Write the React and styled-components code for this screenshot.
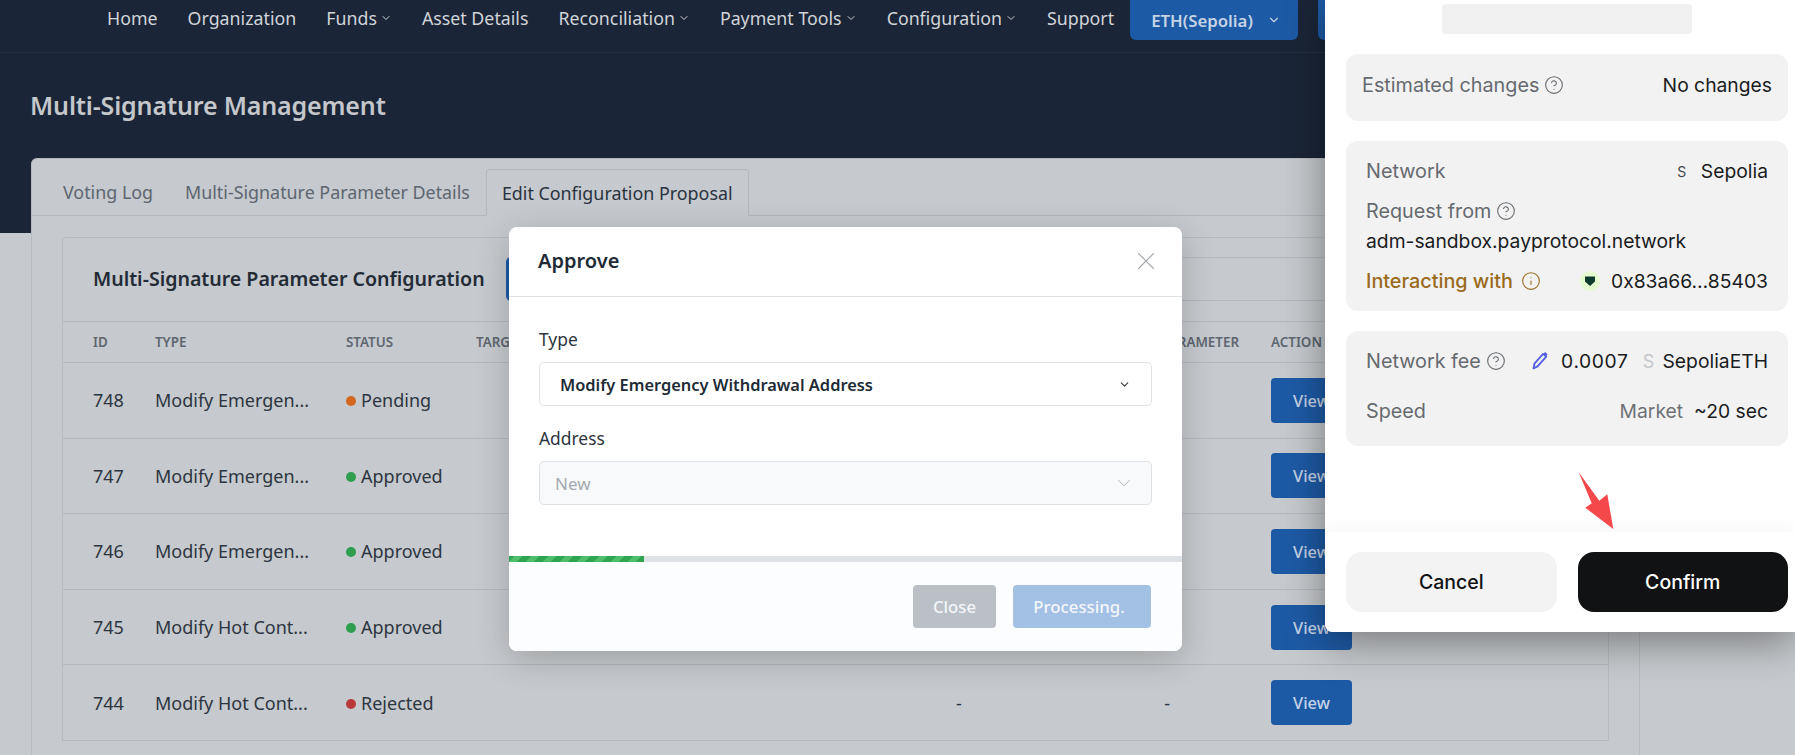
import React from "react";
import styled, { createGlobalStyle } from "styled-components";
import { ChevronDown, X, CircleHelp, Info } from "lucide-react";

const Global = createGlobalStyle`
  html, body { margin: 0; padding: 0; height: 755px; overflow: hidden; background: #c6c9cd; }
  * { box-sizing: border-box; }
  body { font-family: "Noto Sans", "Open Sans", sans-serif; }
`;

const Page = styled.div`
  position: relative;
  width: 1795px;
  height: 755px;
  overflow: hidden;
  background: #c6c9cd;
`;
const Hero = styled.header`
  height: 233px;
  background: #1a2537;
`;
const Nav = styled.nav`
  height: 53px;
  display: flex;
  align-items: flex-start;
  gap: 30px;
  padding-left: 107px;
  border-bottom: 1px solid #232f42;
`;
const NavItem = styled.a`
  display: flex;
  align-items: center;
  gap: 3px;
  height: 36px;
  font-size: 17.8px;
  color: #d1d4d9;
  white-space: nowrap;
`;
const NetworkRow = styled.div`
  display: flex;
  gap: 20px;
  margin-left: -14px;
`;
const NetworkButton = styled.div`
  width: 168px;
  height: 40px;
  padding: 0 17px 0 21px;
  display: flex;
  align-items: center;
  justify-content: space-between;
  background: #1d5aa5;
  border-radius: 0 0 6px 6px;
  color: #c5d3e6;
  font-size: 16.8px;
  font-weight: 600;
  white-space: nowrap;
`;
const PageTitle = styled.h1`
  margin: 32px 0 0 30px;
  font-size: 25px;
  letter-spacing: -0.15px;
  line-height: 40px;
  font-weight: 600;
  color: #c4c7cb;
`;
const Card = styled.section`
  margin: -75px 0 0 31px;
  width: 1609px;
  height: 620px;
  background: #c6c9cd;
  border: 1px solid #b6babf;
  border-bottom: 0;
  border-radius: 6px 6px 0 0;
  position: relative;
`;
const Tabs = styled.div`
  height: 57px;
  padding: 10px 0 0 15px;
  display: flex;
  border-bottom: 1px solid #b4b8be;
`;
const Tab = styled.div`
  height: ${p => (p.$active ? "47px" : "46px")};
  padding: 0 15px;
  display: flex;
  align-items: center;
  font-size: 17.86px;
  white-space: nowrap;
  color: ${p => (p.$active ? "#2a3340" : "#5e6670")};
  border: 1px solid ${p => (p.$active ? "#b4b8be" : "transparent")};
  border-bottom: 1px solid ${p => (p.$active ? "#c6c9cd" : "transparent")};
  border-radius: 4px 4px 0 0;
`;
const Inner = styled.div`
  margin: 21px 30px 0 30px;
  border: 1px solid #b6babf;
  border-bottom: 0;
  border-radius: 4px 4px 0 0;
`;
const InnerHead = styled.div`
  height: 84px;
  padding: 0 0 2px 30px;
  display: flex;
  align-items: center;
  border-bottom: 1px solid #b4b8be;
`;
const InnerTitle = styled.h2`
  margin: 0 21px 0 0;
  font-size: 19.6px;
  font-weight: 600;
  letter-spacing: -0.02px;
  color: #232b36;
  white-space: nowrap;
`;
const AddButton = styled.div`
  width: 130px;
  height: 44px;
  border-radius: 5px;
  background: #1d5aa5;
`;
const HeadFill = styled.div`
  flex: 1;
  height: 44px;
  border-top: 1px solid #b4b8be;
  border-bottom: 1px solid #b4b8be;
`;
const gridCols = "62px 191px 130px 396px 220px 179px 1fr";
const HeadRow = styled.div`
  height: 41px;
  padding-left: 30px;
  display: grid;
  grid-template-columns: ${gridCols};
  align-items: center;
  border-bottom: 1px solid #b4b8be;
  font-size: 13.4px;
  font-weight: 600;
  color: #5e6670;
`;
const HeadCellRight = styled.div`
  text-align: right;
  padding-right: 32px;
  white-space: nowrap;
`;
const Row = styled.div`
  height: 75.6px;
  padding-left: 30px;
  display: grid;
  grid-template-columns: ${gridCols};
  align-items: center;
  border-bottom: 1px solid #b4b8be;
  font-size: 18px;
  color: #2d3540;
`;
const StatusCell = styled.div`
  display: flex;
  align-items: center;
  gap: 5px;
`;
const Dot = styled.span`
  width: 10px;
  height: 10px;
  margin-top: 2px;
  border-radius: 50%;
  background: ${p => p.$color};
`;
const DashA = styled.div`
  padding-left: 84px;
`;
const DashB = styled.div`
  text-align: right;
  padding-right: 101px;
`;
const ViewButton = styled.div`
  width: 81px;
  height: 45px;
  display: flex;
  align-items: center;
  justify-content: center;
  background: #1d5aa5;
  border-radius: 4px;
  color: #c5d3e6;
  font-size: 16.4px;
  font-weight: 500;
`;

/* Modal */
const Modal = styled.div`
  position: absolute;
  left: 509px;
  top: 227px;
  width: 673px;
  height: 424px;
  background: #fff;
  border-radius: 8px;
  overflow: hidden;
  box-shadow: 0 8px 34px rgba(0, 0, 0, 0.2);
  display: flex;
  flex-direction: column;
`;
const ModalHead = styled.div`
  height: 70px;
  padding: 0 21px 2px 29px;
  display: flex;
  align-items: center;
  justify-content: space-between;
  border-bottom: 1px solid #dee2e6;
  color: #212b36;
  font-size: 20px;
  font-weight: 600;
`;
const ModalBody = styled.div`
  height: 259px;
  padding: 30px 30px 0;
`;
const FieldLabel = styled.div`
  height: 24px;
  line-height: 24px;
  margin-bottom: 11px;
  font-size: 17.4px;
  color: #2d3540;
`;
const SelectBox = styled.div`
  height: 44px;
  margin-bottom: ${p => (p.$disabled ? 0 : "20px")};
  padding: 0 ${p => (p.$disabled ? "16px" : "20px")} 0 ${p => (p.$disabled ? "15px" : "20px")};
  display: flex;
  align-items: center;
  justify-content: space-between;
  border: 1px solid #dee2e6;
  border-radius: 5px;
  background: ${p => (p.$disabled ? "#f8f9fa" : "#fff")};
  color: ${p => (p.$disabled ? "#a3a9b0" : "#212b36")};
  font-size: ${p => (p.$disabled ? "17px" : "16.4px")};
  font-weight: ${p => (p.$disabled ? 400 : 600)};
`;
const Progress = styled.div`
  height: 6px;
  background: #dee2e6;
`;
const ProgressFill = styled.div`
  height: 100%;
  width: 20%;
  background: repeating-linear-gradient(-45deg, #2fa552 0 6px, #4fbd6c 6px 12px);
`;
const ModalFoot = styled.div`
  flex: 1;
  padding: 23px 31px 0 0;
  display: flex;
  justify-content: flex-end;
  gap: 17px;
  background: #fcfdfe;
`;
const FootButton = styled.div`
  width: ${p => p.$w}px;
  height: 43px;
  padding-right: ${p => p.$trail || 0}px;
  display: flex;
  align-items: center;
  justify-content: center;
  border-radius: 4px;
  background: ${p => p.$bg};
  color: #f4f6f9;
  font-size: 16.8px;
  font-weight: 500;
`;

/* Wallet panel */
const Wallet = styled.aside`
  position: absolute;
  left: 1325px;
  top: 0;
  width: 470px;
  height: 632px;
  background: #fff;
  border-radius: 0 0 0 8px;
  box-shadow: 0 10px 42px rgba(0, 0, 0, 0.4);
  font-family: "Inter", sans-serif;
  font-size: 19.3px;
  color: #1a1c1e;
  display: flex;
  flex-direction: column;
`;
const WalletScroll = styled.div`
  flex: 1;
  padding: 4px 7px 0 21px;
  display: flex;
  flex-direction: column;
  gap: 20px;
  position: relative;
`;
const Skeleton = styled.div`
  align-self: center;
  width: 250px;
  height: 30px;
  border-radius: 4px;
  background: #f0f0f0;
`;
const InfoCard = styled.div`
  height: ${p => p.$h}px;
  padding: ${p => p.$pad};
  background: #f2f2f2;
  border-radius: 12px;
  display: flex;
  flex-direction: column;
`;
const InfoRow = styled.div`
  height: 24px;
  margin-top: ${p => p.$mt || 0}px;
  display: flex;
  align-items: center;
  justify-content: space-between;
  white-space: nowrap;
`;
const Label = styled.span`
  display: flex;
  align-items: center;
  gap: ${p => p.$gap || 5}px;
  font-size: 19.8px;
  color: ${p => p.$color || "#666a6f"};
  font-weight: ${p => p.$weight || 400};
`;
const Value = styled.span`
  display: flex;
  align-items: center;
  gap: ${p => p.$gap || 8}px;
`;
const Letter = styled.span`
  width: 18px;
  text-align: center;
  font-size: ${p => p.$size || 14}px;
  color: ${p => p.$color || "#44474b"};
`;
const FeeLetter = styled(Letter)`
  margin: 0 -3px 0 3px;
`;
const Amount = styled.span`
  letter-spacing: 0.6px;
`;
const Muted = styled.span`
  color: #6d7175;
`;
const ShieldBadge = styled.span`
  width: 20px;
  height: 20px;
  border-radius: 50%;
  background: #e4fbcf;
  display: flex;
  align-items: center;
  justify-content: center;
`;
const GasSvg = styled.svg`
  margin-right: 4px;
`;
const WalletFoot = styled.div`
  height: 100px;
  padding: 20px 7px 0 21px;
  display: flex;
  gap: 21px;
  background: #fff;
  border-radius: 0 0 0 8px;
  box-shadow: 0 -8px 12px rgba(0, 0, 0, 0.025);
`;
const WalletButton = styled.div`
  flex: 1;
  height: 60px;
  display: flex;
  align-items: center;
  justify-content: center;
  border-radius: 16px;
  font-size: 19.5px;
  font-weight: 500;
  background: ${p => (p.$primary ? "#111213" : "#f3f3f3")};
  color: ${p => (p.$primary ? "#fff" : "#111213")};
`;
const Arrow = styled.svg`
  position: absolute;
  left: 235px;
  top: 460px;
  z-index: 2;
`;

const navItems = [
  ["Home"], ["Organization"], ["Funds", 1], ["Asset Details"],
  ["Reconciliation", 1], ["Payment Tools", 1], ["Configuration", 1], ["Support"],
];
const rows = [
  [748, "Modify Emergen...", "Pending", "#d4671f"],
  [747, "Modify Emergen...", "Approved", "#2f9e4f"],
  [746, "Modify Emergen...", "Approved", "#2f9e4f"],
  [745, "Modify Hot Cont...", "Approved", "#2f9e4f"],
  [744, "Modify Hot Cont...", "Rejected", "#b83a3a"],
];

const GasIcon = () => (
  <GasSvg width="18" height="20" viewBox="0 0 16 18" fill="none">
    <path d="M2.2 15.6 L3 11.4 L10.8 2.6 L13.6 5 L5.8 13.9 Z" stroke="#5561e0" strokeWidth="1.7" strokeLinejoin="round" />
    <path d="M11 2.4 L12.6 0.9 L14.8 3 L13.6 4.8 Z" fill="#5561e0" />
  </GasSvg>
);
const ShieldIcon = () => (
  <svg width="12" height="12" viewBox="0 0 12 12">
    <path d="M1 1.5 H11 V6.5 L6 11 L1 6.5 Z" fill="#0c3a2c" />
  </svg>
);

export default function App() {
  return (
    <Page>
      <Global />
      <Hero>
        <Nav>
          {navItems.map(([t, c]) => (
            <NavItem key={t}>
              {t}
              {c && <ChevronDown size={12} strokeWidth={2} />}
            </NavItem>
          ))}
          <NetworkRow>
            <NetworkButton>
              ETH(Sepolia) <ChevronDown size={14} />
            </NetworkButton>
            <NetworkButton />
          </NetworkRow>
        </Nav>
        <PageTitle>Multi-Signature Management</PageTitle>
      </Hero>
      <Card>
        <Tabs>
          <Tab>Voting Log</Tab>
          <Tab>Multi-Signature Parameter Details</Tab>
          <Tab $active>Edit Configuration Proposal</Tab>
        </Tabs>
        <Inner>
          <InnerHead>
            <InnerTitle>Multi-Signature Parameter Configuration</InnerTitle>
            <AddButton />
            <HeadFill />
          </InnerHead>
          <HeadRow>
            <div>ID</div>
            <div>TYPE</div>
            <div>STATUS</div>
            <div>TARGET</div>
            <div />
            <HeadCellRight>PARAMETER</HeadCellRight>
            <div>ACTION</div>
          </HeadRow>
          {rows.map(([id, type, status, color]) => (
            <Row key={id}>
              <div>{id}</div>
              <div>{type}</div>
              <StatusCell>
                <Dot $color={color} />
                {status}
              </StatusCell>
              <div />
              <DashA>-</DashA>
              <DashB>-</DashB>
              <ViewButton>View</ViewButton>
            </Row>
          ))}
        </Inner>
      </Card>

      <Modal>
        <ModalHead>
          Approve
          <X size={30} strokeWidth={0.9} color="#a6a9ad" />
        </ModalHead>
        <ModalBody>
          <FieldLabel>Type</FieldLabel>
          <SelectBox>
            Modify Emergency Withdrawal Address
            <ChevronDown size={13} color="#343a40" />
          </SelectBox>
          <FieldLabel>Address</FieldLabel>
          <SelectBox $disabled>
            New
            <ChevronDown size={22} strokeWidth={1} color="#a8adb3" />
          </SelectBox>
        </ModalBody>
        <Progress>
          <ProgressFill />
        </Progress>
        <ModalFoot>
          <FootButton $w={83} $bg="#bbc0c6">Close</FootButton>
          <FootButton $w={138} $bg="#a3c1e5" $trail={6}>Processing.</FootButton>
        </ModalFoot>
      </Modal>

      <Wallet>
        <WalletScroll>
          <Skeleton />
          <InfoCard $h={67} $pad="19px 16px">
            <InfoRow>
              <Label>
                Estimated changes <CircleHelp size={20} strokeWidth={1.3} />
              </Label>
              <Value>No changes</Value>
            </InfoRow>
          </InfoCard>
          <InfoCard $h={170} $pad="18px 20px">
            <InfoRow>
              <Label>Network</Label>
              <Value $gap={10}>
                <Letter>S</Letter>Sepolia
              </Value>
            </InfoRow>
            <InfoRow $mt={16}>
              <Label>
                Request from <CircleHelp size={20} strokeWidth={1.3} />
              </Label>
            </InfoRow>
            <InfoRow $mt={6}>
              <span>adm-sandbox.payprotocol.network</span>
            </InfoRow>
            <InfoRow $mt={16}>
              <Label $color="#9b6a1c" $weight={500} $gap={8}>
                Interacting with <Info size={20} strokeWidth={1.3} />
              </Label>
              <Value $gap={11}>
                <ShieldBadge><ShieldIcon /></ShieldBadge>
                0x83a66…85403
              </Value>
            </InfoRow>
          </InfoCard>
          <InfoCard $h={115} $pad="18px 20px">
            <InfoRow>
              <Label>
                Network fee <CircleHelp size={20} strokeWidth={1.3} />
              </Label>
              <Value $gap={8}>
                <GasIcon />
                <Amount>0.0007</Amount>
                <FeeLetter $size={18} $color="#c4c6c8">S</FeeLetter>
                <span>SepoliaETH</span>
              </Value>
            </InfoRow>
            <InfoRow $mt={26}>
              <Label>Speed</Label>
              <Value $gap={11}>
                <Muted>Market</Muted>~20 sec
              </Value>
            </InfoRow>
          </InfoCard>
        </WalletScroll>
        <WalletFoot>
          <WalletButton>Cancel</WalletButton>
          <WalletButton $primary>Confirm</WalletButton>
        </WalletFoot>
        <Arrow width="90" height="90" viewBox="0 0 90 90">
          <polygon points="18.7,12.3 39.3,40.7 47.3,34.3 53.3,69 25.3,47.7 31.7,43.3" fill="#f4484b" />
        </Arrow>
      </Wallet>
    </Page>
  );
}
